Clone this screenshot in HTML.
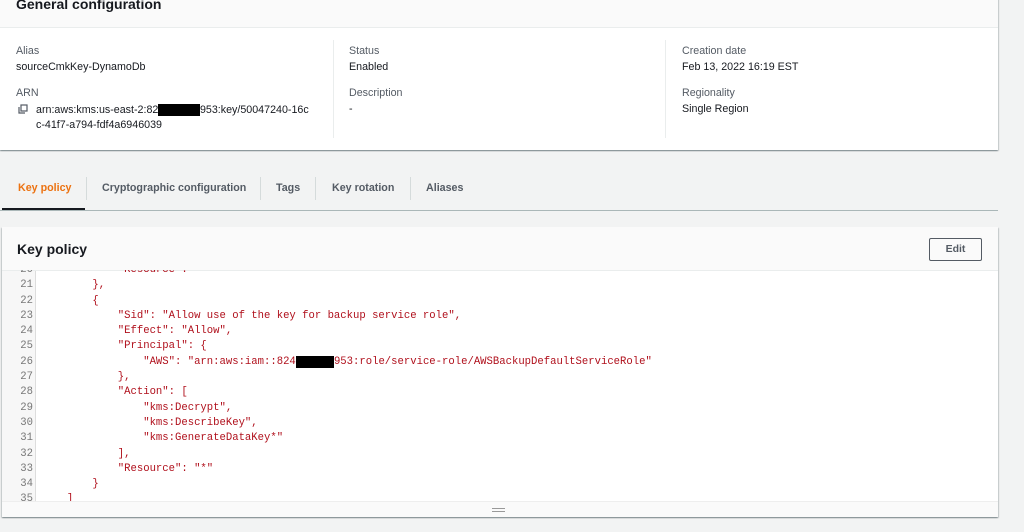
<!DOCTYPE html>
<html><head><meta charset="utf-8"><style>
*{margin:0;padding:0;box-sizing:border-box}
body{width:1024px;height:532px;background:#f2f3f3;font-family:"Liberation Sans",Arial,sans-serif;position:relative;overflow:hidden;color:#16191f}
.card{position:absolute;background:#fff;box-shadow:0 1px 1px rgba(0,28,36,.3),1px 1px 1px rgba(0,28,36,.15),-1px 1px 1px rgba(0,28,36,.15)}
.hd{background:#fafafa;border-bottom:1px solid #eaeded}
.lbl{position:absolute;font-size:10.7px;color:#545b64}
.val{position:absolute;font-size:10.7px;color:#16191f}
.div{position:absolute;top:40px;width:1px;height:98px;background:#eaeded}
.tab{position:absolute;top:182px;font-size:10.7px;font-weight:bold;color:#545b64}
.sep{position:absolute;top:177px;width:1px;height:23px;background:#d5dbdb}
.code{position:absolute;font-family:"Liberation Mono","DejaVu Sans Mono",monospace;font-size:10.6px;color:#b0101c;white-space:pre;line-height:15.3px}
.ln{position:absolute;font-family:"Liberation Mono",monospace;font-size:10.6px;color:#777;line-height:15.3px;text-align:right;width:31px;white-space:pre}
</style></head><body>
<div class="card" style="left:0;top:-2px;width:998px;height:152px">
 <div class="hd" style="height:30px"></div>
 <div style="position:absolute;left:16px;top:-2px;font-size:14px;font-weight:bold">General configuration</div>
</div>
<div class="lbl" style="left:16px;top:45px">Alias</div>
<div class="val" style="left:16px;top:61px">sourceCmkKey-DynamoDb</div>
<div class="lbl" style="left:16px;top:87px">ARN</div>
<svg style="position:absolute;left:18px;top:104px" width="10" height="10" viewBox="0 0 10 10"><rect x="3" y="1" width="6" height="6" fill="none" stroke="#545b64" stroke-width="1.2"/><path d="M1 3v6h6" fill="none" stroke="#545b64" stroke-width="1.2"/></svg>
<div class="val" style="left:36px;top:103px;line-height:15px;width:290px">arn:aws:kms:us-east-2:82<span style="background:#000;color:#000">4XXXXX</span>953:key/50047240-16c<br>c-41f7-a794-fdf4a6946039</div>
<div class="div" style="left:333px"></div>
<div class="lbl" style="left:349px;top:45px">Status</div>
<div class="val" style="left:349px;top:61px">Enabled</div>
<div class="lbl" style="left:349px;top:87px">Description</div>
<div class="val" style="left:349px;top:103px">-</div>
<div class="div" style="left:665px"></div>
<div class="lbl" style="left:682px;top:45px">Creation date</div>
<div class="val" style="left:682px;top:61px">Feb 13, 2022 16:19 EST</div>
<div class="lbl" style="left:682px;top:87px">Regionality</div>
<div class="val" style="left:682px;top:103px">Single Region</div>

<div class="tab" style="left:18px;color:#ec7211">Key policy</div>
<div style="position:absolute;left:2px;top:208px;width:83px;height:2px;background:#16191f"></div>
<div class="sep" style="left:86px"></div>
<div class="tab" style="left:102px">Cryptographic configuration</div>
<div class="sep" style="left:260px"></div>
<div class="tab" style="left:276px">Tags</div>
<div class="sep" style="left:315px"></div>
<div class="tab" style="left:332px">Key rotation</div>
<div class="sep" style="left:410px"></div>
<div class="tab" style="left:426px">Aliases</div>
<div style="position:absolute;left:0;top:210px;width:998px;height:1px;background:#aab7b8"></div>

<div class="card" style="left:2px;top:227px;width:996px;height:290px;overflow:hidden">
 <div class="hd" style="height:44px"></div>
 <div style="position:absolute;left:15px;top:14px;font-size:14px;font-weight:bold">Key policy</div>
 <div style="position:absolute;left:927px;top:11px;width:53px;height:23px;border:1px solid #545b64;border-radius:2px;font-size:10.5px;font-weight:bold;color:#545b64;text-align:center;line-height:21px">Edit</div>
 <div style="position:absolute;left:0;top:44px;width:34px;height:230px;background:#f7f7f7;border-right:1px solid #ddd"></div>
 <div class="ln" style="left:0;top:36px;height:238px;clip-path:inset(7px 0 0 0)">20
21
22
23
24
25
26
27
28
29
30
31
32
33
34
35</div>
 <div class="code" style="left:39.5px;top:36px;height:238px;clip-path:inset(7px 0 0 0)">            "Resource": "*"
        },
        {
            "Sid": "Allow use of the key for backup service role",
            "Effect": "Allow",
            "Principal": {
                "AWS": "arn:aws:iam::824<span style="background:#000;color:#000">XXXXXX</span>953:role/service-role/AWSBackupDefaultServiceRole"
            },
            "Action": [
                "kms:Decrypt",
                "kms:DescribeKey",
                "kms:GenerateDataKey*"
            ],
            "Resource": "*"
        }
    ]</div>
 <div style="position:absolute;left:0;top:274px;width:996px;height:16px;background:#fafafa;border-top:1px solid #eee"></div>
 <div style="position:absolute;left:490px;top:281px;width:13px;height:1px;background:#999"></div>
 <div style="position:absolute;left:490px;top:284px;width:13px;height:1px;background:#999"></div>
</div>
</body></html>
